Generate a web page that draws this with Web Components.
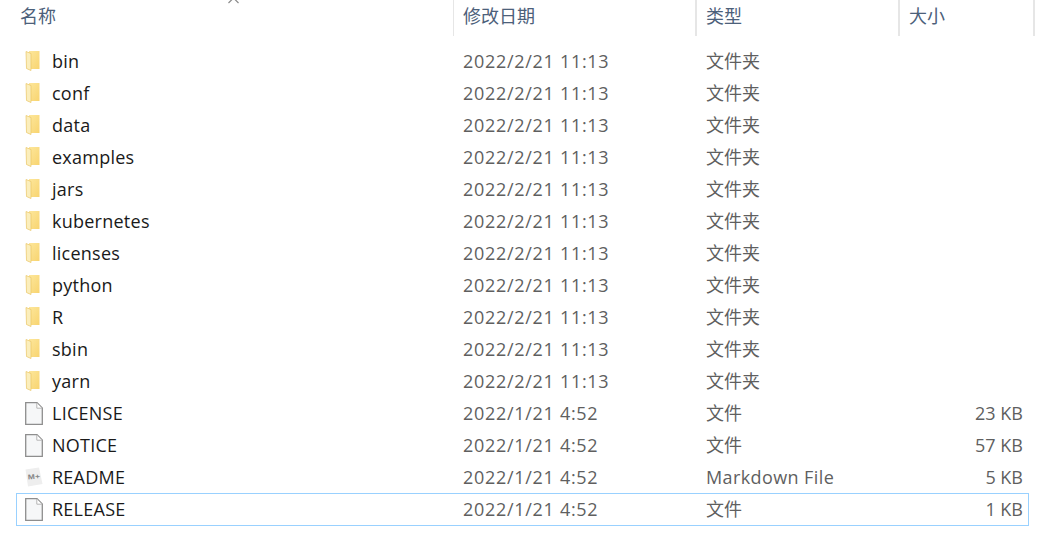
<!DOCTYPE html>
<html lang="zh">
<head>
<meta charset="utf-8">
<title>spark</title>
<style>
html, body { margin: 0; background: #fff; }
body { font-family: "Open Sans", "Noto Sans CJK SC", sans-serif; overflow: hidden; }
</style>
</head>
<body>
<file-list>
  <file-header slot="header"></file-header>
  <file-row icon="folder" name="bin" date="2022/2/21 11:13" type="文件夹"></file-row>
  <file-row icon="folder" name="conf" date="2022/2/21 11:13" type="文件夹"></file-row>
  <file-row icon="folder" name="data" date="2022/2/21 11:13" type="文件夹"></file-row>
  <file-row icon="folder" name="examples" date="2022/2/21 11:13" type="文件夹"></file-row>
  <file-row icon="folder" name="jars" date="2022/2/21 11:13" type="文件夹"></file-row>
  <file-row icon="folder" name="kubernetes" date="2022/2/21 11:13" type="文件夹"></file-row>
  <file-row icon="folder" name="licenses" date="2022/2/21 11:13" type="文件夹"></file-row>
  <file-row icon="folder" name="python" date="2022/2/21 11:13" type="文件夹"></file-row>
  <file-row icon="folder" name="R" date="2022/2/21 11:13" type="文件夹"></file-row>
  <file-row icon="folder" name="sbin" date="2022/2/21 11:13" type="文件夹"></file-row>
  <file-row icon="folder" name="yarn" date="2022/2/21 11:13" type="文件夹"></file-row>
  <file-row icon="file" name="LICENSE" date="2022/1/21 4:52" type="文件" size="23 KB"></file-row>
  <file-row icon="file" name="NOTICE" date="2022/1/21 4:52" type="文件" size="57 KB"></file-row>
  <file-row icon="md" name="README" date="2022/1/21 4:52" type="Markdown File" size="5 KB"></file-row>
  <file-row icon="file" name="RELEASE" date="2022/1/21 4:52" type="文件" size="1 KB" selected></file-row>
</file-list>

<script>
const icons = {
   folder: `<svg width="16" height="22" viewBox="0 0 16 22">
      <defs><linearGradient id="b" x1="0" x2="1" y1="0" y2="1"><stop offset="0" stop-color="#fde79c"/><stop offset="1" stop-color="#f8d470"/></linearGradient></defs>
      <path d="M4 1h10.500v18H4z" fill="url(#b)"/>
      <path d="M1 1.500L6 3.500V20.500L1.500 18.500z" fill="#fbeebc" stroke="#e9c463" stroke-width=".7"/>
   </svg>`,
   file: `<svg width="18" height="23" viewBox="0 0 18 23">
      <path d="M.7.700H12L17.300 6V22.300H.7z" fill="#f6f7f8" stroke="#8e8e8e" stroke-width="1.300"/>
      <path d="M11.800 1V6.200H17" fill="#fff" stroke="#b5b5b5"/>
   </svg>`,
   md: `<svg width="18" height="23" viewBox="0 0 18 23">
      <path d="M.5 3.500L14 1.500L17.500 18L3 20.500z" fill="#eeeeee"/>
      <text x="3" y="13" textLength="12" lengthAdjust="spacingAndGlyphs" transform="rotate(-5 9 12)" font-family="'Liberation Sans',sans-serif" font-size="7" font-weight="700" fill="#858585">M+</text>
   </svg>`
};

const headerTemplate = document.createElement('template');
headerTemplate.innerHTML = `
<style>
:host {
   display: grid;
   grid-template-columns: 454px 243px 203px 135px;
   height: 36px;
   font-size: 18px;
   color: #4c607a;
   position: relative;
}
div {
   border-right: 2px solid #e6e6e6;
   padding-left: 9px;
   line-height: 33px;
   box-sizing: border-box;
}
div:first-of-type {
   padding-left: 20px;
   border-right-width: 1px;
}
.caret {
   position: absolute;
   left: 227px;
   top: -6px;
}
</style>
<div>名称</div>
<div>修改日期</div>
<div>类型</div>
<div>大小</div>
<svg class="caret" width="13" height="10" viewBox="0 0 13 10"><path d="M1.500 9L6.500 4L11.500 9" fill="none" stroke="#8a8a8a" stroke-width="1.200"/></svg>
`;

customElements.define('file-header', class FileHeader extends HTMLElement {
   constructor() {
      super();
      const root = this.attachShadow({ mode: 'open' })
      root.appendChild(headerTemplate.content.cloneNode(true))
   }
});

const rowTemplate = document.createElement('template');
rowTemplate.innerHTML = `
<style>
:host {
   display: grid;
   grid-template-columns: 35px 411px 243px 1fr;
   align-items: center;
   height: 32px;
   box-sizing: border-box;
   margin-left: 16px;
   width: 1013px;
   border: 1px solid transparent;
   font-size: 18px;
   color: #5f5f5f;
}
:host([selected]) {
   border-color: #99d1ff;
   height: 33px;
   padding-bottom: 1px;
}
.icon {
   display: flex;
   padding-left: 8px;
}
.name {
   color: #1a1a1a;
   letter-spacing: .25px;
}
.date {
   letter-spacing: .7px;
}
.size {
   display: flex;
   align-items: center;
   justify-content: space-between;
}
.size b {
   font-weight: 400;
   padding-right: 5px;
}
.type {
   letter-spacing: .4px;
}
:host([type^="文"]) .type {
   letter-spacing: 0;
   margin-bottom: 2px;
}
</style>
<span class="icon"></span>
<span class="name"></span>
<span class="date"></span>
<span class="size"><span class="type"></span><b></b></span>
`;

customElements.define('file-row', class FileRow extends HTMLElement {
   $(selector) {
      return this.shadowRoot && this.shadowRoot.querySelector(selector)
   }

   constructor() {
      super();
      const root = this.attachShadow({ mode: 'open' })
      root.appendChild(rowTemplate.content.cloneNode(true))
   }

   connectedCallback() {
      this.$('.icon').innerHTML = icons[this.getAttribute('icon')];
      this.$('.name').textContent = this.getAttribute('name');
      this.$('.date').textContent = this.getAttribute('date');
      this.$('.type').textContent = this.getAttribute('type');
      this.$('b').textContent = this.getAttribute('size') || '';
   }
});

const listTemplate = document.createElement('template');
listTemplate.innerHTML = `
<style>
:host {
   display: block;
   width: 1054px;
   height: 535px;
   overflow: hidden;
}
.rows {
   display: flex;
   flex-direction: column;
   padding-top: 9px;
}
</style>
<slot name="header"></slot>
<div class="rows"><slot></slot></div>
`;

customElements.define('file-list', class FileList extends HTMLElement {
   constructor() {
      super();
      const root = this.attachShadow({ mode: 'open' })
      root.appendChild(listTemplate.content.cloneNode(true))
   }
});
</script>
</body>
</html>
